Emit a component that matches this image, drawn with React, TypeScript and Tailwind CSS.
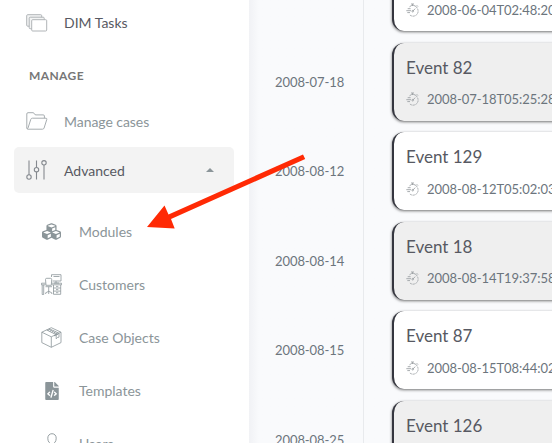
import type { ReactNode } from "react";
import { FaCubes, FaFileCode } from "react-icons/fa";

const events = [
  { name: "Event 64", day: "2008-06-04", time: "2008-06-04T02:48:20" },
  { name: "Event 82", day: "2008-07-18", time: "2008-07-18T05:25:28" },
  { name: "Event 129", day: "2008-08-12", time: "2008-08-12T05:02:03" },
  { name: "Event 18", day: "2008-08-14", time: "2008-08-14T19:37:58" },
  { name: "Event 87", day: "2008-08-15", time: "2008-08-15T08:44:02" },
  { name: "Event 126", day: "2008-08-25", time: "2008-08-25T10:12:41" },
];

function TasksIcon() {
  return (
    <svg width="22" height="18" viewBox="0 0 22 18" fill="#fff" stroke="#b0b4b7" strokeWidth="1">
      <rect x="0.7" y="0.7" width="15" height="11.5" rx="1" fill="#f3f4f4" />
      <rect x="3.2" y="3.2" width="15" height="11.5" rx="1" fill="#f3f4f4" />
      <rect x="5.7" y="5.7" width="15" height="11.3" rx="1" />
    </svg>
  );
}

function FolderIcon() {
  return (
    <svg width="22" height="18" viewBox="0 0 22 18" fill="none" stroke="#a7adb0" strokeWidth="1">
      <path d="M.8 16V2Q.8.7 2 .7H7Q8 .7 8.3 1.7Q8.6 2.9 10 2.9H17.2Q18.4 2.9 18.4 4V6.2M.8 16Q.8 17.2 2 17.2H16.5Q17.7 17.2 18.1 16L20.8 7.4Q21 6.2 20 6.2H6.3Q5.2 6.2 4.8 7.3L2 16Q1.6 17.2.8 16" />
    </svg>
  );
}

function SlidersIcon() {
  return (
    <svg width="22" height="20" viewBox="0 0 22 20" fill="none" stroke="#85898f" strokeWidth="1.1">
      <path d="M3 .5V15" strokeWidth="1.5" stroke="#a3a6aa" />
      <circle cx="3" cy="17" r="2.2" />
      <path d="M10.5.5V7.3M10.5 12V19.5" />
      <circle cx="10.5" cy="9.7" r="2.2" />
      <path d="M18 5V19.5" strokeWidth="1.5" stroke="#a3a6aa" />
      <circle cx="18" cy="2.8" r="2.2" />
    </svg>
  );
}

function DeskIcon() {
  return (
    <svg width="21" height="21" viewBox="0 0 21 21" fill="none" stroke="#8b9599" strokeWidth=".8">
      <path d="M10.5 3V.7H20V7H11.5M12.5 2.5H18.5M15 7V9M13 9H18" />
      <path d="M4.5 5.5Q4.5 4.3 5.7 4.3H9.4Q10.7 4.3 10.7 5.5L10.3 11.3H5Z" />
      <path d="M.5 9.2H4.6M10.5 9.2H20.5V10.8H10.8M.5 9.2V10.8H4.6M1.2 11V20.5H2.7V11M4.5 12.7H11M7.7 12.7V17.5M4.7 20V18.8L7.7 17.3L10.8 18.8V20M7.7 17V20M12.5 11V20.3H19.7V11M12.5 14H19.7M12.5 17.1H19.7M15 12.4H17.3M15 15.6H17.3M15 18.7H17.3" />
    </svg>
  );
}

function BoxIcon() {
  return (
    <svg width="21" height="21" viewBox="0 0 21 21" fill="none" stroke="#8b9599" strokeWidth=".8" strokeLinejoin="round">
      <path d="M10.3.7L20 5.2V15.6L10.3 20.3L.8 15.6V5.2ZM.8 5.2L10.3 9.8L20 5.2M10.3 9.8V20.3" />
      <path d="M5.7 3L15.2 7.6V11.8L16.6 10.4L18 10.2V6.2L8.3 1.8" />
      <path d="M6.8 3.4L8.8 2.3M8.7 4.3L10.8 3.2M10.7 5.2L12.7 4.1M12.6 6.1L14.6 5M14.2 7L16.3 5.9M13 8.8L17.3 7" strokeWidth="1" />
    </svg>
  );
}

function UserIcon() {
  return (
    <svg width="20" height="21" viewBox="0 0 20 21" fill="none" stroke="#8b9599" strokeWidth=".9">
      <path d="M10 .7C7.4.7 5.8 2.6 5.8 5.2C5.8 8.3 7.4 11 10 11C12.6 11 14.2 8.3 14.2 5.2C14.2 2.6 12.6.7 10 .7ZM1 20C1 15 4 13.5 7.5 12.5M19 20C19 15 16 13.5 12.5 12.5" />
    </svg>
  );
}

function StopwatchIcon() {
  return (
    <svg width="13" height="14" viewBox="0 0 13 14" fill="none" stroke="#9da1a5" strokeWidth=".9">
      <path d="M3.5 3.8A4.8 4.8 0 0 1 11.2 5" />
      <path d="M11.4 5.6A5 5 0 0 1 3.9 12" strokeDasharray="2.2 .7" />
      <path d="M5 1H8M6.5 1V2.8M10.7 2.2L12 3.6M6.8 8.2L9.2 5.6M1.7 5.7H4.6M.3 7.7H5M1.3 9.6H4" />
      <circle cx="6.7" cy="8.2" r=".8" />
    </svg>
  );
}

function SubItem({ icon, label }: { icon: ReactNode; label: string }) {
  return (
    <a className="flex h-[53px] items-center pl-[41px] text-[14px] text-[#8b9599]">
      <span className="flex w-[21px] justify-center">{icon}</span>
      <span className="ml-[17px]">{label}</span>
    </a>
  );
}

export default function App() {
  return (
    <div className="relative flex h-[443px] w-[552px] overflow-hidden bg-[#f9fafc] font-['Lato',sans-serif]">
      <aside className="z-10 h-full w-[249px] shrink-0 overflow-hidden bg-white text-[14px]">
        <a className="flex h-[45px] items-center pl-[26px] text-[#575962]">
          <TasksIcon />
          <span className="ml-4">DIM Tasks</span>
        </a>
        <h4 className="mt-[21px] h-5 pl-[29px] text-[12px] leading-5 font-bold tracking-[0.4px] text-[#777]">MANAGE</h4>
        <a className="mt-3 flex h-[46px] items-center pl-[26px] text-[#8b9599]">
          <FolderIcon />
          <span className="ml-4 tracking-[-0.05px]">Manage cases</span>
        </a>
        <a className="mt-[3px] mr-[15px] ml-[14px] flex h-[46px] items-center rounded-[5px] bg-[#f3f3f3] pl-3 text-[#575962]">
          <SlidersIcon />
          <span className="ml-4">Advanced</span>
          <svg className="mr-5 ml-auto" width="8" height="4" viewBox="0 0 8 4" fill="#8b9599">
            <path d="M4 0L8 4H0Z" />
          </svg>
        </a>
        <nav className="mt-3">
          <SubItem icon={<FaCubes size={19} />} label="Modules" />
          <SubItem icon={<DeskIcon />} label="Customers" />
          <SubItem icon={<BoxIcon />} label="Case Objects" />
          <SubItem icon={<FaFileCode size={18} />} label="Templates" />
          <SubItem icon={<UserIcon />} label="Users" />
        </nav>
      </aside>
      <main className="flex-1 overflow-hidden bg-linear-to-r from-[#f1f2f5] to-[#f9fafc] to-[10px]">
        <div className="-mt-[52px]">
          {events.map((event, i) => (
            <section key={event.day} className="flex h-[89.5px]">
              <time className="flex w-[115px] shrink-0 items-center border-r border-[#e8eaed] pl-[26px] text-[13px] tracking-[-0.08px] text-[#6c757d]">
                {event.day}
              </time>
              <article
                className={`mt-[5px] mb-[6.5px] ml-[28px] w-[220px] shrink-0 rounded-[12px] border-l-2 border-[#35363f] pt-[13px] pl-3 shadow-[0_1px_3px_rgba(0,0,0,0.55)] ${i % 2 ? "bg-[#efefef]" : "bg-white"}`}
              >
                <h3 className="text-[17px] leading-6 text-[#575962]">{event.name}</h3>
                <p className="mt-[9.5px] flex items-center text-[13px] leading-5 text-[#6c757d]">
                  <StopwatchIcon />
                  <span className="ml-2 tracking-[-0.05px]">{event.time}</span>
                </p>
              </article>
            </section>
          ))}
        </div>
      </main>
      <svg className="absolute inset-0 z-20" width="552" height="443" viewBox="0 0 552 443" fill="#ff2a05">
        <path d="M303 154.5L305.2 159L171 219L174.7 228.5L147 227L164.5 205.5L168.5 214.5Z" />
      </svg>
    </div>
  );
}
